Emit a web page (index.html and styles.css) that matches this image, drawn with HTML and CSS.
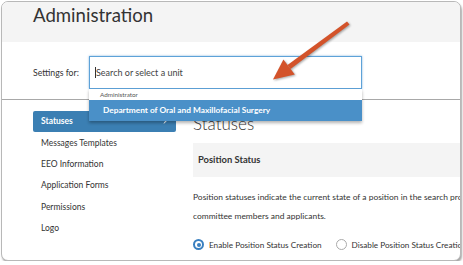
FILE: index.html
```html
<!DOCTYPE html>
<html>
<head>
<meta charset="utf-8">
<link rel="stylesheet" href="styles.css">
</head>
<body>
<div class="window">
  <header class="hdr"><h1 class="title">Administration</h1></header>
  <section class="settings">
    <span class="settings-label">Settings for:</span>
    <div class="combo">
      <div class="input"><span class="caret"></span><span class="ph">Search or select a unit</span></div>
      <div class="dropdown">
        <div class="dd-group">Administrator</div>
        <div class="dd-item">Department of Oral and Maxillofacial Surgery</div>
      </div>
    </div>
  </section>
  <div class="main">
    <nav class="side">
      <div class="nav-item active">Statuses
        <svg class="pencil" width="8" height="8" viewBox="0 0 8 8"><path d="M1.5 7 L2.3 5 L6 1.3 L6.8 2.1 L3.1 5.8 Z" fill="#fff"/></svg>
      </div>
      <div class="nav-item">Messages Templates</div>
      <div class="nav-item">EEO Information</div>
      <div class="nav-item">Application Forms</div>
      <div class="nav-item">Permissions</div>
      <div class="nav-item">Logo</div>
    </nav>
    <div class="content">
      <h2 class="heading">Statuses</h2>
      <div class="panel-head">Position Status</div>
      <p class="desc">Position statuses indicate the current state of a position in the search process and are visible to<br>committee members and applicants.</p>
      <div class="radios">
        <span class="radio on"></span><span class="radio-label">Enable Position Status Creation</span>
        <span class="radio"></span><span class="radio-label">Disable Position Status Creation</span>
      </div>
    </div>
  </div>
  <svg class="arrow" width="463" height="265" viewBox="0 0 463 265">
    <g fill="#d3532a">
      <path d="M347 21.5 L349.5 24.5 L290.5 69 L287.5 65 Z"/>
      <path d="M273 79.5 L294.8 74.6 L283.4 59.4 Z"/>
    </g>
  </svg>
</div>
</body>
</html>
```
FILE: styles.css
```css
* { box-sizing: border-box; }
body {
  margin: 0;
  background: #fff;
  font-family: Lato, "Open Sans", sans-serif;
  color: #333;
}
.window {
  position: relative;
  margin: 1px 0 0 1px;
  width: 460px;
  height: 260px;
  border: 1px solid #b8b8b8;
  border-radius: 7px;
  box-shadow: 1px 2px 2px rgba(0,0,0,0.35);
  overflow: hidden;
  background: #fff;
}
.hdr {
  height: 40px;
  background: #f4f4f4;
  padding-left: 31px;
}
.title {
  margin: 0;
  font-size: 18.6px;
  font-weight: 400;
  line-height: 24px;
  padding-top: 1px;
  color: #333;
}
.settings {
  display: flex;
  align-items: center;
  height: 58px;
  padding: 14px 0 10px 31px;
  border-bottom: 1px solid #a8a8a8;
  position: relative;
  z-index: 2;
}
.settings-label {
  width: 56px;
  font-size: 8.7px;
  color: #333;
}
.combo {
  position: relative;
  width: 273px;
}
.input {
  height: 33px;
  border: 1px solid #5ea2d8;
  box-shadow: 0 0 2px rgba(80,150,210,0.7);
  display: flex;
  align-items: center;
  padding-left: 5px;
  font-size: 9px;
  color: #444;
  background: #fff;
}
.caret {
  width: 1px;
  height: 11px;
  background: #333;
}
.dropdown {
  position: absolute;
  top: 100%;
  left: 0;
  width: 273px;
  background: #fff;
  box-shadow: 0 2px 3px rgba(0,0,0,0.3);
}
.dd-group {
  height: 11px;
  line-height: 11px;
  font-size: 6.3px;
  color: #555;
  padding-left: 11px;
}
.dd-item {
  height: 21px;
  line-height: 21px;
  background: #4a90c8;
  color: #fff;
  font-weight: 700;
  font-size: 8.3px;
  padding-left: 14px;
}
.main {
  display: flex;
  padding-left: 31px;
}
.side {
  width: 143px;
  padding-top: 11px;
  flex: none;
}
.nav-item {
  position: relative;
  height: 21.4px;
  line-height: 21.4px;
  padding-left: 8px;
  font-size: 8.5px;
  color: #333;
}
.nav-item.active {
  height: 21px;
  line-height: 21px;
  margin-bottom: 0.6px;
  background: #3b7fb3;
  color: #fff;
  font-weight: 700;
  border-radius: 2px;
}
.pencil {
  position: absolute;
  right: 6px;
  top: 6px;
}
.content {
  margin-left: 17px;
  padding-top: 14px;
  flex: 1;
  min-width: 0;
}
.heading {
  margin: 0 0 9px;
  font-size: 17px;
  line-height: 20px;
  font-weight: 300;
  color: #333;
}
.panel-head {
  height: 34px;
  line-height: 34px;
  background: #f4f4f4;
  padding-left: 5px;
  font-weight: 700;
  font-size: 9.4px;
  white-space: nowrap;
}
.desc {
  margin: 11px 0 0;
  font-size: 8.45px;
  line-height: 19px;
  white-space: nowrap;
}
.radios {
  margin-top: 9px;
  height: 19px;
  display: flex;
  align-items: center;
  font-size: 8.2px;
  white-space: nowrap;
}
.radio {
  width: 11px;
  height: 11px;
  border-radius: 50%;
  border: 1px solid #aaa;
  flex: none;
  position: relative;
}
.radio.on {
  border: 2px solid #3a80c0;
}
.radio.on::after {
  content: "";
  position: absolute;
  left: 1.5px;
  top: 1.5px;
  width: 4px;
  height: 4px;
  border-radius: 50%;
  background: #3a80c0;
}
.radio-label {
  margin-left: 5px;
  margin-right: 14px;
}
.arrow {
  position: absolute;
  left: -2px;
  top: -2px;
  z-index: 5;
  filter: drop-shadow(1px 1px 1px rgba(0,0,0,0.35));
}
```
